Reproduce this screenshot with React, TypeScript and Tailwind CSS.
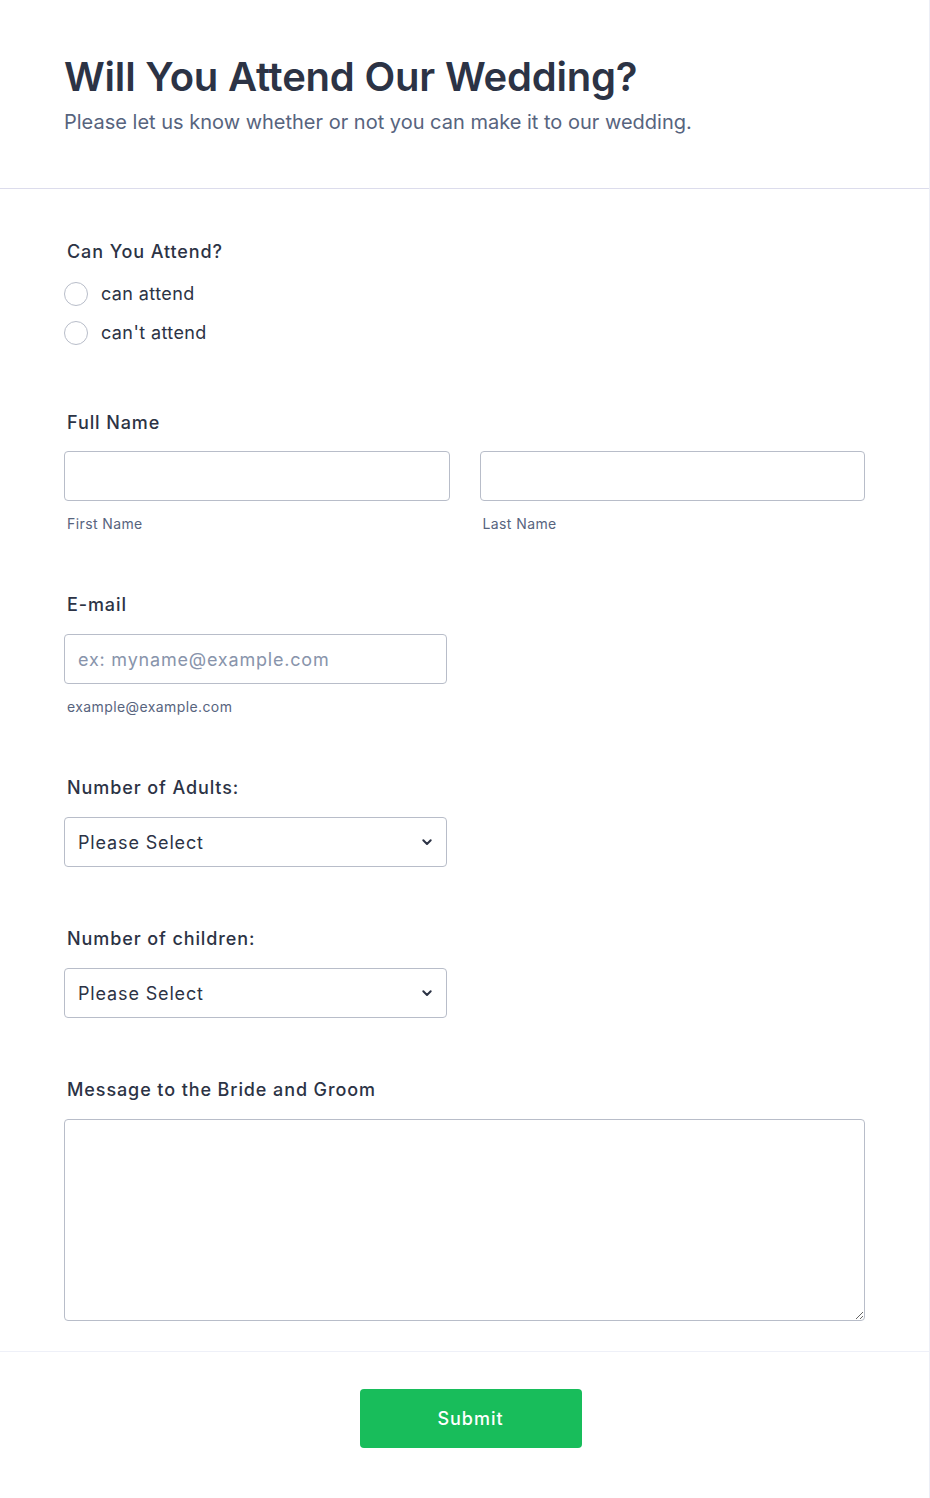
import React from 'react';

const font = { fontFamily: 'Inter, "Noto Sans", sans-serif' };

const labelCls = "pl-[3px] text-[18px] leading-[28px] font-medium text-[#2c3345] tracking-[0.9px]";
const subCls = "pl-[3px] text-[14px] leading-[20px] text-[#57647e] tracking-[0.4px]";

function Chevron() {
  return (
    <svg className="w-3 h-3 text-[#2c3345]" viewBox="0 0 12 12" fill="none">
      <path d="M2.3 4.3 6 8l3.7-3.7" stroke="currentColor" strokeWidth="2" strokeLinecap="round" strokeLinejoin="round" />
    </svg>
  );
}

function SelectBox() {
  return (
    <div className="mt-[15px] w-[383px] h-[50px] border border-[#b8bdc9] rounded-[4px] bg-white flex items-center justify-between pl-[13px] pr-[13px]">
      <span className="text-[18px] text-[#2c3345] tracking-[0.85px]">Please Select</span>
      <Chevron />
    </div>
  );
}

export default function App() {
  return (
    <div className="w-[930px] min-h-[1498px] bg-white border-r border-[#eceef6]" style={font}>
      {/* header */}
      <div className="px-16 pt-[53px] pb-[52px] border-b border-[#dcdcec]">
        <h1 className="text-[40px] leading-[48px] font-semibold text-[#2c3345] tracking-[-0.2px]">
          Will You Attend Our Wedding?
        </h1>
        <p className="mt-[7px] text-[20px] leading-[28px] text-[#57647e]">
          Please let us know whether or not you can make it to our wedding.
        </p>
      </div>

      {/* form */}
      <div className="px-16 pb-[30px]">
        <div className={"mt-[49px] " + labelCls}>Can You Attend?</div>
        <div className="mt-[8px]">
          {["can attend", "can't attend"].map((opt) => (
            <label key={opt} className="h-[39px] flex items-center gap-[13px]">
              <span className="w-6 h-6 rounded-full border border-[#b8bdc9] bg-white" />
              <span className="text-[18px] text-[#2c3345] tracking-[0.4px]">{opt}</span>
            </label>
          ))}
        </div>

        <div className={"mt-[57px] " + labelCls}>Full Name</div>
        <div className="mt-[14px] grid grid-cols-2 gap-[30px]">
          <div>
            <div className="h-[50px] border border-[#b8bdc9] rounded-[4px]" />
            <div className={"mt-[13px] " + subCls}>First Name</div>
          </div>
          <div>
            <div className="h-[50px] border border-[#b8bdc9] rounded-[4px]" />
            <div className={"mt-[13px] " + subCls}>Last Name</div>
          </div>
        </div>

        <div className={"mt-[57px] " + labelCls}>E-mail</div>
        <div className="mt-[15px] w-[383px] h-[50px] border border-[#b8bdc9] rounded-[4px] flex items-center pl-[13px]">
          <span className="text-[18px] text-[#8894ab] tracking-[0.8px]">ex: myname@example.com</span>
        </div>
        <div className={"mt-[13px] " + subCls}>example@example.com</div>

        <div className={"mt-[57px] " + labelCls}>Number of Adults:</div>
        <SelectBox />

        <div className={"mt-[58px] " + labelCls}>Number of children:</div>
        <SelectBox />

        <div className={"mt-[58px] " + labelCls}>Message to the Bride and Groom</div>
        <textarea className="mt-[15px] block w-full h-[202px] border border-[#b8bdc9] rounded-[4px] resize-y" />
      </div>

      {/* footer */}
      <div className="border-t border-[#eef0f8] pt-[37px] pb-[50px] pl-[12px] flex justify-center">
        <button className="w-[222px] h-[59px] rounded-[4px] bg-[#18bd5b] text-white text-[18px] font-medium tracking-[1px]">
          Submit
        </button>
      </div>
    </div>
  );
}
